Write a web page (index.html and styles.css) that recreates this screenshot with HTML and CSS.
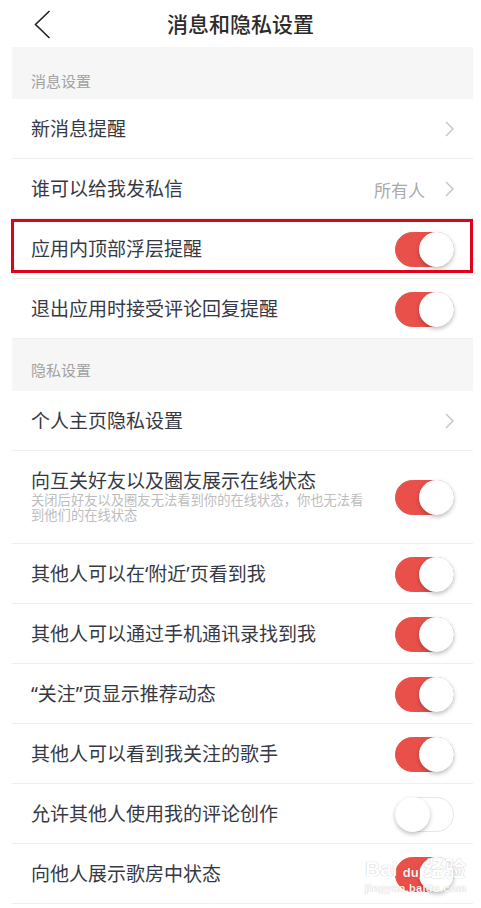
FILE: index.html
```html
<!DOCTYPE html>
<html lang="zh-CN">
  <head>
    <meta charset="UTF-8" />
    <meta name="viewport" content="width=device-width, initial-scale=1.0" />
    <title>消息和隐私设置</title>
    <link rel="stylesheet" href="styles.css">
  </head>
  <body>
    <header class="topbar">
      <span class="back">
        <svg width="17" height="29" viewBox="0 0 17 29">
          <polyline points="15.5,1 1.5,14.5 15.5,28" fill="none" stroke="#222" stroke-width="1.6" />
        </svg>
      </span>
      <h1 class="title">消息和隐私设置</h1>
      <span></span>
    </header>

    <main class="main">
      <div class="section">消息设置</div>
      <div class="row">
        <span class="label">新消息提醒</span>
        <span class="arrow"></span>
      </div>
      <div class="row">
        <span class="label">谁可以给我发私信</span>
        <span class="value">所有人</span>
        <span class="arrow"></span>
      </div>
      <div class="row marked">
        <span class="label">应用内顶部浮层提醒</span>
        <span class="switch on"></span>
        <div class="mark"></div>
      </div>
      <div class="row">
        <span class="label">退出应用时接受评论回复提醒</span>
        <span class="switch on"></span>
      </div>

      <div class="section second">隐私设置</div>
      <div class="row">
        <span class="label">个人主页隐私设置</span>
        <span class="arrow"></span>
      </div>
      <div class="row tall">
        <div class="texts">
          <span class="label">向互关好友以及圈友展示在线状态</span>
          <span class="desc">关闭后好友以及圈友无法看到你的在线状态，你也无法看到他们的在线状态</span>
        </div>
        <span class="switch on"></span>
      </div>
      <div class="row">
        <span class="label">其他人可以在‘附近’页看到我</span>
        <span class="switch on"></span>
      </div>
      <div class="row">
        <span class="label">其他人可以通过手机通讯录找到我</span>
        <span class="switch on"></span>
      </div>
      <div class="row">
        <span class="label">“关注”页显示推荐动态</span>
        <span class="switch on"></span>
      </div>
      <div class="row">
        <span class="label">其他人可以看到我关注的歌手</span>
        <span class="switch on"></span>
      </div>
      <div class="row">
        <span class="label">允许其他人使用我的评论创作</span>
        <span class="switch"></span>
      </div>
      <div class="row">
        <span class="label">向他人展示歌房中状态</span>
        <span class="switch on"></span>
        <div class="watermark">
          <div class="wm-top">
            <span>Bai</span>
            <span class="paw">du</span>
            <span>经验</span>
          </div>
          <div class="wm-url">jingyan.baidu.com</div>
        </div>
      </div>
    </main>
  </body>
</html>
```

FILE: styles.css
```css
body {
  margin: 0;
  background: #fff;
  font-family: "Noto Sans", "Noto Sans CJK SC", sans-serif;
  color: #363944;
}

.topbar {
  display: grid;
  grid-template-columns: 1fr auto 1fr;
  align-items: center;
  height: 47px;
}
.back {
  display: flex;
  padding-left: 34px;
  padding-top: 1px;
}
.title {
  margin: 0;
  font-size: 21px;
  font-weight: 500;
  color: #2b2b2b;
  line-height: 44px;
}

.main {
  padding: 0 8px 0 12px;
}

.section {
  height: 52px;
  box-sizing: border-box;
  padding: 23px 19px 0;
  background: #f6f6f6;
  font-size: 15px;
  line-height: 22px;
  color: #a2a2a2;
}
.section.second {
  padding-top: 20px;
}

.row {
  position: relative;
  display: flex;
  align-items: center;
  gap: 20px;
  height: 60px;
  box-sizing: border-box;
  padding: 1px 19px 0;
  border-bottom: 1px solid #efefef;
}
.row.tall {
  height: 93px;
  padding-top: 0;
}

.label {
  flex: 1;
  font-size: 19px;
  line-height: 22px;
}
.texts {
  flex: 1;
  display: flex;
  flex-direction: column;
}
.texts .label {
  line-height: 21px;
  margin-bottom: 1px;
}
.desc {
  max-width: 336px;
  font-size: 13.3px;
  line-height: 15px;
  color: #bdbdbd;
}
.value {
  font-size: 17px;
  color: #a9a9a9;
}

.arrow {
  width: 9px;
  height: 16px;
  background: url("data:image/svg+xml,%3Csvg xmlns='http://www.w3.org/2000/svg' width='9' height='16'%3E%3Cpolyline points='1,1 8,8 1,15' fill='none' stroke='%23c4c4c4' stroke-width='1.4'/%3E%3C/svg%3E") no-repeat;
}

.switch {
  position: relative;
  width: 59px;
  height: 35px;
  box-sizing: border-box;
  border-radius: 18px;
  background: #fff;
  border: 1px solid #e6e6e6;
}
.switch::after {
  content: "";
  position: absolute;
  top: -1px;
  left: -1px;
  width: 35px;
  height: 35px;
  border-radius: 50%;
  background: #fff;
  box-shadow: 0 2px 4px rgba(0, 0, 0, 0.25);
}
.switch.on {
  background: #e9504a;
  border-color: #e9504a;
}
.switch.on::after {
  left: auto;
  right: -1px;
}

.mark {
  position: absolute;
  top: 0;
  left: -1px;
  right: 0;
  height: 54px;
  border: 3px solid #e3001b;
  box-sizing: border-box;
}

.watermark {
  position: absolute;
  left: 353px;
  top: 13px;
  color: #fff;
  text-shadow: 0 0 1px rgba(0, 0, 0, 0.35);
  font-family: "Liberation Sans", "Noto Sans CJK SC", sans-serif;
  opacity: 0.9;
}
.wm-top {
  display: flex;
  align-items: center;
  gap: 2px;
  font-size: 21px;
  font-weight: bold;
  line-height: 24px;
}
.paw {
  display: inline-flex;
  align-items: flex-end;
  justify-content: center;
  width: 22px;
  height: 24px;
  font-size: 13px;
  line-height: 16px;
  border-radius: 10px 10px 8px 8px;
  background: radial-gradient(circle at 50% 70%, #e8504a 45%, transparent 47%);
}
.wm-url {
  font-size: 11px;
  line-height: 14px;
  font-weight: bold;
  letter-spacing: 0.3px;
}
```
